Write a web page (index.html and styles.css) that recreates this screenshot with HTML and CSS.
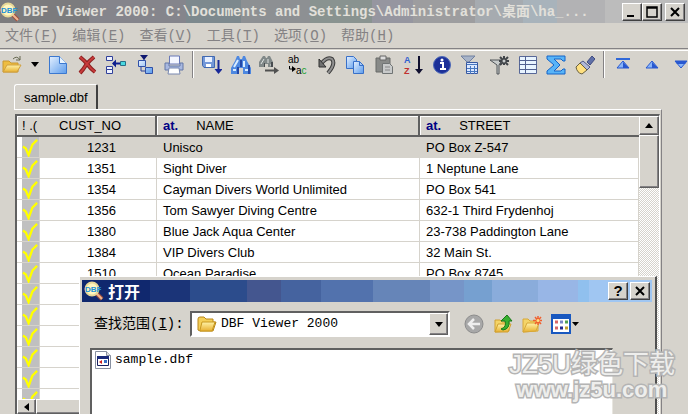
FILE: index.html
```html
<!DOCTYPE html>
<html lang="zh-CN">
<head>
    <meta charset="UTF-8">
    <meta name="viewport" content="width=device-width, initial-scale=1.0">
    <title>DBF Viewer 2000</title>
    <link rel="stylesheet" href="styles.css">
</head>
<body>
    <svg class="defs" aria-hidden="true">
        <defs>
            <linearGradient id="blue" x1="0" y1="0" x2="1" y2="1">
                <stop offset="0" stop-color="#e4f0ff"/>
                <stop offset="1" stop-color="#5c9cec"/>
            </linearGradient>
            <linearGradient id="gold" x1="0" y1="0" x2="0" y2="1">
                <stop offset="0" stop-color="#fff3a8"/>
                <stop offset="1" stop-color="#e8b030"/>
            </linearGradient>
            <symbol id="logo" viewBox="0 0 20 20">
                <path d="M12 12l6 6" stroke="#a05040" stroke-width="4"/>
                <path d="M12 12l6 6" stroke="#f0b890" stroke-width="2"/>
                <circle cx="8" cy="8" r="6.5" fill="#fff6c0" stroke="#e8d898" stroke-width="2"/>
                <text x="1" y="11" class="logo-text">DBF</text>
            </symbol>
            <symbol id="check" viewBox="0 0 18 20">
                <path d="M1 9l3 2 3 7 4-11 2-2 3-3" fill="none" stroke="#ffff00" stroke-width="2.500"/>
            </symbol>
            <symbol id="folder" viewBox="0 0 20 18">
                <path d="M1 15V4q0-2 2-2h4l2 2h7v3l3 0-3 9H3z" fill="#f4cf58" stroke="#b88618"/>
                <path d="M3 15l2-8h13l-3 9H3z" fill="url(#gold)" stroke="#c89820"/>
            </symbol>
        </defs>
    </svg>

    <div class="window">
        <!-- Title bar -->
        <header class="titlebar">
            <svg class="logo"><use href="#logo"/></svg>
            <span class="title">DBF Viewer 2000: C:\Documents and Settings\Administrator\桌面\ha_...</span>
            <div class="caption-buttons">
                <button aria-label="Minimize"><svg viewBox="0 0 16 14"><path d="M3 11h7" stroke="#000" stroke-width="2"/></svg></button>
                <button aria-label="Maximize"><svg viewBox="0 0 16 14"><path d="M3 2h10v10H3zM3 3h10" fill="none" stroke="#000" stroke-width="1.5"/></svg></button>
                <button class="close" aria-label="Close"><svg viewBox="0 0 16 14"><path d="M4 3l8 8M12 3l-8 8" stroke="#000" stroke-width="2"/></svg></button>
            </div>
        </header>

        <nav class="menu">
            <button>文件(<u>F</u>)</button>
            <button>编辑(<u>E</u>)</button>
            <button>查看(<u>V</u>)</button>
            <button>工具(<u>T</u>)</button>
            <button>选项(<u>O</u>)</button>
            <button>帮助(<u>H</u>)</button>
        </nav>

        <!-- Toolbar -->
        <div class="toolbar">
            <div class="group">
                <button aria-label="Open"><svg viewBox="0 0 20 20"><path d="M1 17V6h6l2 2h7v9z" fill="#eebd40" stroke="#c89830"/><path d="M1 17l4-7h14l-4 7z" fill="url(#gold)" stroke="#d0a040"/><path d="M11 4q4-4 7 1M18 1v4h-4" fill="none" stroke="#666850"/></svg></button>
                <button class="drop" aria-label="Recent files"><svg viewBox="0 0 8 5"><path d="M0 0h8L4 5z"/></svg></button>
                <button aria-label="New"><svg viewBox="0 0 20 20"><path d="M1.500 1.500h10l7 7v10h-17z" fill="url(#blue)" stroke="#3b78d0"/><path d="M11.500 1.500v7h7" fill="#e8f4ff" stroke="#3b78d0"/></svg></button>
                <button aria-label="Delete"><svg viewBox="0 0 20 20"><path d="M3 2q5 4 8 8 3 4 7 7M17 2q-5 4-8 8-3 5-6 8" fill="none" stroke="#8c2020" stroke-width="4"/><path d="M3 2q5 4 8 8 3 4 7 7M17 2q-5 4-8 8-3 5-6 8" fill="none" stroke="#c83b3b" stroke-width="2"/></svg></button>
                <button aria-label="Insert record"><svg viewBox="0 0 20 20"><path d="M.5 1.500h6v4h-6zM.5 11.500h6v3h-6zM.5 14.500h6v4h-6z" fill="#eef2ff" stroke="#30409a"/><path d="M14.500 6.500h5v4h-5z" fill="#48d8e0" stroke="#287088"/><path d="M7 8.500h7" stroke="#102090" stroke-width="2"/><path d="M6 8.500l4-4v8z" fill="#102090"/></svg></button>
                <button aria-label="Append field"><svg viewBox="0 0 20 20"><path d="M5 0h8L9 5z" fill="#101870"/><path d="M9 4v2M6 12v4h5" fill="none" stroke="#28409a"/><path d="M3.500 5.500h7v6h-7zM10.500 12.500h7v6h-7z" fill="url(#blue)" stroke="#3050a8"/></svg></button>
                <button aria-label="Print"><svg viewBox="0 0 20 20"><path d="M5.500 1h10v8h-10z" fill="#f4f6ff" stroke="#6878b8"/><path d="M1 8h4v3h11V8h3v7H1z" fill="#a8b8e0" stroke="#6478a8"/><path d="M5 13h10l1 6H4z" fill="#fff" stroke="#7888b0"/></svg></button>
            </div>
            <div class="group wide">
                <button aria-label="Save"><svg viewBox="0 0 20 20"><path d="M.5 1.500h12v11H2l-1.500-2z" fill="#7498d8" stroke="#4068b0"/><path d="M3 2h7v5H3z" fill="#e8f0ff"/><path d="M4 9h5v3H4z" fill="#fff"/><path d="M16.500 5v11" stroke="#182898" stroke-width="2"/><path d="M12.500 14h8l-4 5z" fill="#182898"/></svg></button>
                <button aria-label="Find"><svg viewBox="0 0 20 20"><path d="M6 1h2l1 3h2l1-3h2l2 5 4 7v6h-8v-6H8v6H0v-6l4-7z" fill="#4e88e0"/><path d="M3 12l4-7M13 12V6M2 15h3M14 15h3" stroke="#d8ecff" stroke-width="2"/><path d="M6 12h2v7H6zM17 10h2v9h-2zM9 5h2v7H9z" fill="#2348a8"/></svg></button>
                <button aria-label="Find next"><svg viewBox="0 0 20 20"><path d="M4 1h2l1 2h1l1-2h2l3 6v5h-5V9H6v3H0V7z" fill="#808888"/><path d="M2 9l3-5M9 8V4M11 10h2" stroke="#e0e4e4"/><path d="M5 8h1v4H5zM12 7h2v5h-2z" fill="#484c50"/><path d="M6 15.500h10" stroke="#505050" stroke-width="2"/><path d="M15 12l5 3.500-5 3.500z" fill="#505050"/></svg></button>
                <button aria-label="Replace"><svg viewBox="0 0 20 20"><text x="0" y="8" class="glyph">ab</text><text x="8" y="19" class="glyph">a<tspan class="green">c</tspan></text><path d="M1.500 11v3h3" fill="none" stroke="#000"/><path d="M4 11l4 3-4 3z"/></svg></button>
                <button aria-label="Undo"><svg viewBox="0 0 20 20"><path d="M4 9q6-8 11-5 4 5-4 14" fill="none" stroke="#3c3c3c" stroke-width="4"/><path d="M4 9q6-8 11-5 4 5-4 14" fill="none" stroke="#909090" stroke-width="2"/><path d="M2 4v8h7z" fill="#707070" stroke="#303030"/></svg></button>
                <button aria-label="Copy"><svg viewBox="0 0 20 20"><path d="M1.500 1.500h7l3 3v9h-10z" fill="url(#blue)" stroke="#3870c8"/><path d="M8.500 6.500h6l4 4v8h-10z" fill="url(#blue)" stroke="#3870c8"/><path d="M14.500 6.500v4h4" fill="none" stroke="#3870c8"/></svg></button>
                <button aria-label="Paste"><svg viewBox="0 0 20 20"><path d="M2 3h14v14H2z" fill="#888a88" stroke="#686a68"/><path d="M6 1h6v4H6z" fill="#ddd" stroke="#666"/><path d="M8.500 8.500h7l3 3v7h-10z" fill="#c8caca" stroke="#707474"/><path d="M11 12h5M11 15h5" stroke="#888"/></svg></button>
                <button aria-label="Sort"><svg viewBox="0 0 20 20"><text x="1" y="8" class="sort a">A</text><text x="1" y="19" class="sort z">Z</text><path d="M16 1v15" stroke="#101030" stroke-width="2"/><path d="M12 14h8l-4 5z" fill="#101030"/></svg></button>
                <button aria-label="Information"><svg viewBox="0 0 20 20"><circle cx="10" cy="10" r="8.500" fill="#1c3098" stroke="#4c68b8"/><path d="M8 8h3v6m-3 0h6" fill="none" stroke="#fff" stroke-width="2"/><circle cx="10" cy="5" r="1.500" fill="#fff"/></svg></button>
                <button aria-label="Filter data"><svg viewBox="0 0 20 20"><path d="M1 1h14L9 7H7z" fill="#a8b4c8" stroke="#7080a0"/><path d="M6.500 7.500h11v11h-11z" fill="#dce8ff" stroke="#3858a0"/><path d="M7 9.500h10M7 13.500h10M7 16.500h10M10.500 11v8M14.500 11v8" stroke="#4878c0"/></svg></button>
                <button aria-label="Filter"><svg viewBox="0 0 20 20"><path d="M1 5h12l-3 5v9H8v-9z" fill="#c8cccc" stroke="#505458"/><path d="M11 2l8 8M19 2l-8 8M15 1v9M10 6h10" stroke="#404448" stroke-width="2"/><circle cx="15" cy="6" r="1.500" fill="#c8cccc"/></svg></button>
                <button aria-label="Grid"><svg viewBox="0 0 20 20"><path d="M1.500 1.500h17v17h-17z" fill="#e8f4ff" stroke="#586898"/><path d="M1 5.500h18M1 9.500h18M1 14.500h18M7.500 1v18" stroke="#506090"/></svg></button>
                <button aria-label="Sum"><svg viewBox="0 0 20 20"><path d="M1 1h18v5h-2l-2-2H8l6 6-6 6h7l2-2h2v5H1v-3l7-6-7-6z" fill="#58b4f8" stroke="#1464c8"/></svg></button>
                <button aria-label="Clean"><svg viewBox="0 0 20 20"><path d="M12 7l5-6 3 3-5 6z" fill="#6070a8" stroke="#404c80"/><path d="M8 6l7 6-3 3-7-7z" fill="#b0b8d8" stroke="#505888"/><path d="M5 8l7 7-5 4q-5-1-6-7z" fill="#ffe080" stroke="#686040"/></svg></button>
            </div>
            <div class="group">
                <button aria-label="First record"><svg viewBox="0 0 20 20"><path d="M3 4h14" stroke="#3068d8" stroke-width="2"/><path d="M10 6l6 7H4z" fill="#88b4f8" stroke="#2858d0"/><path d="M10 7l6 6h-6z" fill="#2858d0"/></svg></button>
                <button aria-label="Previous record"><svg viewBox="0 0 20 20"><path d="M10 6l6 7H4z" fill="#88b4f8" stroke="#2858d0"/><path d="M10 7l6 6h-6z" fill="#2858d0"/></svg></button>
                <button aria-label="Next record"><svg viewBox="0 0 20 20"><path d="M10 13l6-7H4z" fill="#88b4f8" stroke="#2858d0"/><path d="M4 6h12l-2 3H6z" fill="#2858d0"/></svg></button>
            </div>
        </div>

        <!-- Data -->
        <main class="page">
            <button class="tab">sample.dbf</button>
            <div class="sheet">
                <div class="grid">
                    <div class="rows">
                        <table>
                            <thead>
                                <tr><th class="mark">! .(</th><th class="num">CUST_NO</th><th class="name"><b>at.</b>NAME</th><th><b>at.</b>STREET</th></tr>
                            </thead>
                            <tbody>
                                <tr class="selected"><td class="mark"><svg><use href="#check"/></svg></td><td class="num">1231</td><td>Unisco</td><td>PO Box Z-547</td></tr>
                                <tr><td class="mark"><svg><use href="#check"/></svg></td><td class="num">1351</td><td>Sight Diver</td><td>1 Neptune Lane</td></tr>
                                <tr><td class="mark"><svg><use href="#check"/></svg></td><td class="num">1354</td><td>Cayman Divers World Unlimited</td><td>PO Box 541</td></tr>
                                <tr><td class="mark"><svg><use href="#check"/></svg></td><td class="num">1356</td><td>Tom Sawyer Diving Centre</td><td>632-1 Third Frydenhoj</td></tr>
                                <tr><td class="mark"><svg><use href="#check"/></svg></td><td class="num">1380</td><td>Blue Jack Aqua Center</td><td>23-738 Paddington Lane</td></tr>
                                <tr><td class="mark"><svg><use href="#check"/></svg></td><td class="num">1384</td><td>VIP Divers Club</td><td>32 Main St.</td></tr>
                                <tr><td class="mark"><svg><use href="#check"/></svg></td><td class="num">1510</td><td>Ocean Paradise</td><td>PO Box 8745</td></tr>
                                <tr><td class="mark"><svg><use href="#check"/></svg></td><td></td><td></td><td></td></tr>
                                <tr><td class="mark"><svg><use href="#check"/></svg></td><td></td><td></td><td></td></tr>
                                <tr><td class="mark"><svg><use href="#check"/></svg></td><td></td><td></td><td></td></tr>
                                <tr><td class="mark"><svg><use href="#check"/></svg></td><td></td><td></td><td></td></tr>
                                <tr><td class="mark"><svg><use href="#check"/></svg></td><td></td><td></td><td></td></tr>
                                <tr><td class="mark"><svg><use href="#check"/></svg></td><td></td><td></td><td></td></tr>
                            </tbody>
                        </table>
                    </div>
                    <div class="vscroll">
                        <button aria-label="Scroll up"><svg viewBox="0 0 8 5"><path d="M0 5h8L4 0z"/></svg></button>
                        <div class="thumb"></div>
                    </div>
                    <div class="hscroll">
                        <button aria-label="Scroll left"><svg viewBox="0 0 5 8"><path d="M5 0v8L0 4z"/></svg></button>
                        <div class="thumb"></div>
                    </div>
                </div>
            </div>
        </main>
    </div>

    <!-- Open file dialog -->
    <section class="dialog" role="dialog" aria-labelledby="dialog-title">
        <header class="dialog-title">
            <svg class="logo"><use href="#logo"/></svg>
            <h2 id="dialog-title">打开</h2>
            <div class="caption-buttons">
                <button class="help" aria-label="Help">?</button>
                <button aria-label="Close"><svg viewBox="0 0 16 14"><path d="M4 3l8 8M12 3l-8 8" stroke="#000" stroke-width="2"/></svg></button>
            </div>
        </header>
        <div class="lookin">
            <label for="folder-select">查找范围(<u>I</u>):</label>
            <div class="combo">
                <svg class="folder"><use href="#folder"/></svg>
                <select id="folder-select"><option>DBF Viewer 2000</option></select>
                <span class="combo-arrow"><svg viewBox="0 0 8 5"><path d="M0 0h8L4 5z"/></svg></span>
            </div>
            <div class="places">
                <button aria-label="Back"><svg viewBox="0 0 20 20"><circle cx="10" cy="10" r="9" fill="#a8a8a8" stroke="#8c8c8c"/><path d="M16 10H6M10 5l-5 5 5 5" fill="none" stroke="#eee" stroke-width="2.500"/></svg></button>
                <button aria-label="Up one level"><svg viewBox="0 0 20 20"><path d="M2 18V6h5l2 2h7v9z" fill="#f4d468" stroke="#d0a030"/><path d="M2 18l3-8h13l-3 8z" fill="url(#gold)" stroke="#d0a030"/><path d="M8 15q6-2 4-8H8l6-6 5 6h-3q1 8-6 9z" fill="#38b030" stroke="#187818"/></svg></button>
                <button aria-label="New folder"><svg viewBox="0 0 20 20"><path d="M1 18V5h5l2 2h8v10z" fill="#f4d468" stroke="#d8a838"/><path d="M1 18l4-9h12l-3 8z" fill="url(#gold)" stroke="#d8a838"/><path d="M16 2v9M11 6.500h9M13 3l6 7M19 3l-6 7" stroke="#f06030" stroke-width="1.500"/><circle cx="16" cy="6.500" r="1.500" fill="#ffe080"/></svg></button>
                <button class="views" aria-label="Views"><svg viewBox="0 0 28 20"><path d="M1 1h18v18H1z" fill="#fff" stroke="#1858c0" stroke-width="2"/><path d="M0 0h20v5H0z" fill="#1858c0"/><path d="M4 8h3M4 14h3" stroke="#d86868" stroke-width="3"/><path d="M9 8h3" stroke="#7888c8" stroke-width="3"/><path d="M9 14h3" stroke="#202890" stroke-width="3"/><path d="M14 8h3" stroke="#50a050" stroke-width="3"/><path d="M14 14h3" stroke="#c0a030" stroke-width="3"/><path d="M21 8h7l-3.500 4z"/></svg></button>
            </div>
        </div>
        <div class="files">
            <button class="file">
                <svg viewBox="0 0 16 18"><path d="M.5.5h11l4 4v13H.5z" fill="#fff" stroke="#8890a0"/><path d="M11.500.5v4h4" fill="#ddd" stroke="#8890a0"/><path d="M2.500 5.500h11v9h-11z" fill="#fff" stroke="#182060"/><path d="M2 5h12v3H2z" fill="#182878"/><path d="M7 9v4l-3-2z" fill="#d02020"/><path d="M9 9h3v3H9z" fill="#3870c8"/></svg>
                sample.dbf
            </button>
        </div>
    </section>

    <div class="watermark">
        <span class="brand">JZ5U绿色下载</span>
        <span class="site">www.jz5u.com</span>
    </div>
</body>
</html>
```
FILE: styles.css
```css
* {
    box-sizing: border-box;
}

body {
    margin: 0;
    height: 100vh;
    overflow: hidden;
    position: relative;
    background-color: #d6d3cc;
    font-family: "Liberation Sans", "Noto Sans CJK SC", sans-serif;
    font-size: 13px;
    color: #000;
}

button {
    padding: 0;
    border: none;
    background: none;
    font: inherit;
    color: inherit;
}

svg {
    display: block;
}

.defs {
    position: absolute;
    width: 0;
    height: 0;
}

.logo {
    width: 20px;
    height: 20px;
    flex: none;
}

.logo-text {
    font: bold 8px "Liberation Sans", sans-serif;
    fill: #2090d8;
}

.window {
    height: 100%;
    display: flex;
    flex-direction: column;
}

/* Title bar */
.titlebar {
    flex: none;
    height: 23px;
    display: flex;
    align-items: center;
    gap: 3px;
    padding-right: 3px;
    background: linear-gradient(90deg, #7c7c7e 0 13%, #85858c 13% 27%, #7d898e 27% 35%, #8d9093 35% 45%, #899390 45% 54%, #9696a0 54% 60%, #9d9d9f 60% 69%, #a6abb0 69% 76%, #a8b3bb 76% 81%, #b2b2b4 81% 88%, #bcbcbc 88%);
}

.title {
    flex: 1;
    overflow: hidden;
    white-space: nowrap;
    font: bold 14px/20px "Liberation Mono", "Noto Sans CJK SC", monospace;
    color: #e2e0da;
}

.caption-buttons {
    display: flex;
    margin-left: auto;
}

.caption-buttons button {
    width: 20px;
    height: 18px;
    display: grid;
    place-items: center;
    background-color: #d6d3cc;
    border: 1px solid;
    border-color: #fff #404040 #404040 #fff;
    box-shadow: inset -1px -1px #848284;
}

.caption-buttons svg {
    width: 16px;
    height: 14px;
}

.titlebar .close {
    margin-left: 3px;
}

/* Menu */
.menu {
    flex: none;
    display: flex;
    gap: 14px;
    height: 26px;
    padding-left: 5px;
    border-bottom: 1px solid #848284;
    font: 14px/24px "Liberation Mono", "Noto Sans CJK SC", monospace;
    color: #848284;
}

/* Toolbar */
.toolbar {
    flex: none;
    display: flex;
    height: 34px;
    margin-top: 1px;
    border-top: 1px solid #fff;
    overflow: hidden;
}

.group {
    flex: none;
    display: flex;
    align-items: center;
    gap: 9px;
    height: 27px;
    padding: 0 8px 0 2px;
}

.group.wide {
    flex: 1;
    justify-content: space-between;
    gap: 0;
}

.group + .group {
    border-left: 1px solid #848284;
    box-shadow: inset 1px 0 #fff;
    padding-left: 9px;
}

.group:last-child {
    padding-right: 0;
    margin-right: -3px;
}

.group svg {
    width: 20px;
    height: 20px;
}

.group .drop svg {
    width: 8px;
    height: 5px;
}

.glyph {
    font: 10px "Liberation Sans", sans-serif;
}

.green {
    fill: #20a030;
}

.sort {
    font: bold 9px "Liberation Sans", sans-serif;
}

.sort.a {
    fill: #3060d0;
}

.sort.z {
    fill: #c03030;
}

/* Tab page */
.page {
    flex: 1;
    min-height: 0;
    display: flex;
    flex-direction: column;
    align-items: flex-start;
    margin: 0 26px 0 14px;
}

.tab {
    height: 25px;
    padding: 0 8px 0 9px;
    border: 1px solid #fff;
    border-right: 2px solid #404040;
    border-bottom: none;
    border-radius: 3px 2px 0 0;
}

.sheet {
    flex: 1;
    min-height: 0;
    align-self: stretch;
    padding: 4px 1px 0 1px;
    border-top: 1px solid #fff;
    border-right: 1px solid #848284;
}

.grid {
    height: 100%;
    display: grid;
    grid-template-columns: 1fr 20px;
    grid-template-rows: 1fr 15px;
    border: 2px solid #606060;
    border-right: 1px solid #fff;
    border-bottom: none;
}

.rows {
    min-height: 0;
    overflow: hidden;
    background-color: #fff;
}

table {
    width: 100%;
    table-layout: fixed;
    border-collapse: separate;
    border-spacing: 0;
}

th, td {
    height: 21px;
    padding: 0 0 0 6px;
    text-align: left;
    font-weight: normal;
    white-space: nowrap;
}

th {
    background-color: #d6d3cc;
    border-right: 2px solid #606060;
    border-bottom: 2px solid #606060;
    box-shadow: inset 1px 1px #fff;
}

th:first-child, th:last-child {
    border-right: none;
}

th b {
    margin-right: 18px;
    color: #000084;
}

td {
    border-right: 1px solid #d6d3cc;
    border-bottom: 1px solid #d6d3cc;
}

th.mark, td.mark {
    width: 23px;
    padding: 0 0 0 5px;
}

td.mark {
    background: linear-gradient(90deg, #fff 5px, #c0c0c0 5px);
}

.mark svg {
    width: 17px;
    height: 19px;
}

th.num {
    width: 117px;
    padding-left: 19px;
    box-shadow: inset 0 1px #fff;
}

th.name {
    width: 263px;
}

td.num {
    padding-left: 7px;
    text-align: center;
}

.selected td {
    background-color: #d6d3cc;
}

.selected td.mark {
    background-color: #c0c0c0;
}

.vscroll, .hscroll {
    display: flex;
    background: repeating-conic-gradient(#fff 0 25%, #d6d3cc 0 50%) 0 0 / 2px 2px;
}

.vscroll {
    flex-direction: column;
    grid-row: 1 / 3;
    grid-column: 2;
}

.vscroll button, .hscroll button, .thumb, .combo-arrow {
    background-color: #d6d3cc;
    border: 1px solid;
    border-color: #fff #606060 #606060 #fff;
    box-shadow: inset -1px -1px #848284;
    display: grid;
    place-items: center;
}

.vscroll button {
    height: 19px;
}

.vscroll svg, .combo-arrow svg {
    width: 8px;
    height: 5px;
}

.vscroll .thumb {
    height: 53px;
}

.hscroll button {
    width: 19px;
}

.hscroll svg {
    width: 5px;
    height: 8px;
}

.hscroll .thumb {
    flex: 1;
}

/* Open dialog */
.dialog {
    position: absolute;
    left: 79px;
    right: 31px;
    top: 276px;
    bottom: 0;
    display: flex;
    flex-direction: column;
    padding: 3px 3px 0 2px;
    background-color: #d6d3cc;
    border: 1px solid #fff;
    border-right: 2px solid #505050;
    border-bottom: none;
}

.dialog-title {
    flex: none;
    height: 22px;
    display: flex;
    align-items: center;
    gap: 4px;
    padding: 0 2px;
    background: linear-gradient(90deg, #10286e 0 12%, #1b3478 12% 19%, #2c4c8c 19% 29%, #44568f 29% 35%, #45639f 35% 42%, #5272ad 42% 51%, #6685b8 51% 61%, #7695c8 61% 67%, #76a0d0 67% 72%, #8aacdb 72% 80%, #98b6e6 80% 87%, #90c0ee 87% 89%, #a0c6f2 89%);
}

.dialog-title h2 {
    margin: 0;
    font: bold 16px/20px "Noto Sans CJK SC", sans-serif;
    color: #fff;
}

.dialog-title .caption-buttons {
    gap: 2px;
}

.caption-buttons .help {
    font-weight: bold;
    font-size: 15px;
    line-height: 14px;
}

.lookin {
    flex: none;
    display: flex;
    align-items: center;
    height: 46px;
    padding: 0 0 2px 12px;
}

.lookin label {
    width: 96px;
    font: 14px/20px "Liberation Mono", "Noto Sans CJK SC", monospace;
}

.combo {
    flex: 1;
    position: relative;
    display: flex;
    height: 26px;
    border: 2px solid #606060;
    border-right-color: #fff;
    border-bottom-color: #fff;
}

.combo select {
    width: 100%;
    padding: 0 0 0 29px;
    border: none;
    border-radius: 0;
    appearance: none;
    background-color: #fff;
    font: 13px/20px "Liberation Mono", monospace;
    color: #000;
}

.folder {
    position: absolute;
    left: 5px;
    top: 2px;
    width: 20px;
    height: 18px;
}

.combo-arrow {
    position: absolute;
    right: 0;
    top: 0;
    bottom: 0;
    width: 19px;
    pointer-events: none;
}

.places {
    display: flex;
    gap: 9px;
    width: 202px;
    padding-left: 14px;
}

.places svg {
    width: 20px;
    height: 20px;
}

.places .views svg {
    width: 28px;
}

.files {
    flex: 1;
    margin: 0 39px 0 8px;
    padding: 1px 3px;
    background-color: #fff;
    border: 2px solid #606060;
    border-right: 1px solid #e8e6e0;
    border-bottom: none;
}

.file {
    display: flex;
    align-items: center;
    gap: 4px;
    font: 13px/18px "Liberation Mono", monospace;
}

.file svg {
    width: 16px;
    height: 18px;
}

/* Site mark over the lower right corner */
.watermark {
    position: absolute;
    right: 13px;
    bottom: 12px;
    display: flex;
    flex-direction: column;
    align-items: center;
    color: #eeeeec;
    -webkit-text-stroke: 3px #b4b4b4;
    paint-order: stroke fill;
    white-space: nowrap;
    pointer-events: none;
}

.brand {
    font: 26px/28px "Liberation Sans", "Noto Sans CJK SC", sans-serif;
}

.site {
    font: bold 22px/24px "Liberation Sans", sans-serif;
}
```
